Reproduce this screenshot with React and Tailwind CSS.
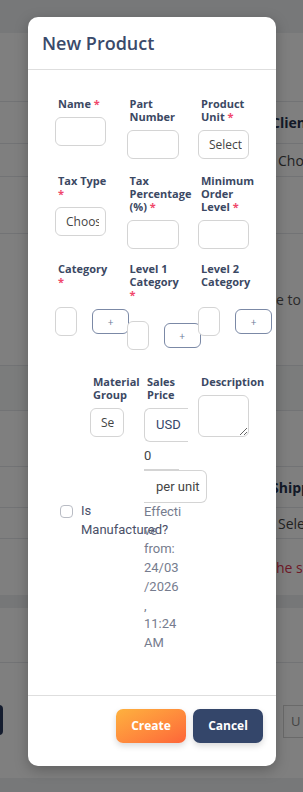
import React from "react";

const Label = ({ children, req }) => (
  <div className="pl-[3px] text-[11px] font-bold leading-[13px] text-[#3b4863]">
    {children}
    {req && <span className="text-[#f0476b]"> *</span>}
  </div>
);

const Box = ({ className = "", pr = "pr-[6px]", children }) => (
  <div
    className={`shrink-0 h-[29px] rounded-[6px] border border-[#d4d4d4] bg-white flex items-center pl-[10px] ${pr} text-[12px] text-[#444] ${className}`}
  >
    <span className="block w-full overflow-hidden whitespace-nowrap">{children}</span>
  </div>
);

const AddButton = () => (
  <button className="shrink-0 w-[37px] h-[25px] rounded-[6px] border border-[#7b89a6] text-[10px] leading-none text-[#6b7a99] bg-white">
    +
  </button>
);

const effective = ["Effecti", "ve", "from:", "24/03", "/2026", ",", "11:24", "AM"];

const BackgroundPage = () => (
  <div className="w-full h-[792px] bg-white overflow-hidden font-['Open_Sans',sans-serif]">
    <div className="h-[33px] bg-[#eef0f3]" />
    <div className="h-[69px] border-b border-[#e5e7eb]" />
    <div className="h-[42px] border-b border-[#e5e7eb] flex items-center pl-[271px] text-[14px] font-bold text-[#26334f] whitespace-nowrap">
      Client
    </div>
    <div className="h-[33px] border-b border-[#e5e7eb] flex items-center pl-[278px] text-[14px] text-[#444] whitespace-nowrap">
      Choose
    </div>
    <div className="h-[57px] border-b border-[#e5e7eb]" />
    <div className="h-[131px] flex items-center pl-[276px] text-[14px] text-[#555] whitespace-nowrap">
      e to upload
    </div>
    <div className="h-[45px] bg-[#f7f8f9] border-t border-[#e5e7eb]" />
    <div className="h-[57px] border-t border-b border-[#e5e7eb]" />
    <div className="h-[41px] border-b border-[#e5e7eb] flex items-center pl-[271px] text-[14px] font-bold text-[#26334f] whitespace-nowrap">
      Shipping
    </div>
    <div className="h-[31px] border-b border-[#e5e7eb] flex items-center pl-[278px] text-[14px] text-[#444] whitespace-nowrap">
      Select
    </div>
    <div className="h-[56px] flex items-center pl-[276px] text-[14px] text-[#e0334f] whitespace-nowrap">
      he shipping
    </div>
    <div className="h-[13px] bg-[#eceef1]" />
    <div className="h-[55px] border-b border-[#e5e7eb]" />
    <div className="h-[115px] flex items-start justify-between pt-[42px]">
      <div className="w-[8px] h-[30px] -ml-[5px] rounded-[6px] bg-[#2a3a5e]" />
      <div className="w-[20px] h-[33px] border-y border-l border-[#d4d4d4] flex items-center pl-[7px] text-[13px] text-[#888]">
        U
      </div>
    </div>
    <div className="h-[14px] bg-[#eef0f3]" />
  </div>
);

export default function App() {
  return (
    <div className="relative w-[303px] h-[792px] overflow-hidden">
      <BackgroundPage />
      <div className="absolute inset-0 bg-black/50" />

      <div className="absolute left-[28px] top-[17px] w-[248px] h-[749px] bg-white rounded-[10px] shadow-[0_4px_14px_rgba(0,0,0,0.25)] flex flex-col overflow-hidden font-['Open_Sans',sans-serif]">
        {/* header */}
        <div className="h-[53px] shrink-0 border-b border-[#dedede] flex items-center pl-[14px]">
          <h1 className="text-[18px] font-semibold text-[#3a4a6b]">New Product</h1>
        </div>

        {/* body */}
        <div className="flex-1 overflow-hidden pt-[27px] pl-[27px]">
          {/* row 1 */}
          <div className="flex gap-[20px] items-start">
            <div className="w-[51.5px]">
              <Label req>Name</Label>
              <Box className="mt-[7px] w-[51px]" />
            </div>
            <div className="w-[51.5px]">
              <Label>Part Number</Label>
              <Box className="mt-[7px] w-[52px]" />
            </div>
            <div className="w-[51.5px]">
              <Label req>Product Unit</Label>
              <Box className="mt-[7px] w-[51px]">Select</Box>
            </div>
          </div>

          {/* row 2 */}
          <div className="flex gap-[20px] items-start mt-[15px]">
            <div className="w-[51.5px]">
              <Label req>Tax Type</Label>
              <Box className="mt-[7px] w-[51px]">Choose</Box>
            </div>
            <div className="w-[51.5px]">
              <Label req>Tax Percentage (%)</Label>
              <Box className="mt-[7px] w-[52px] bg-[#e9ecef]" />
            </div>
            <div className="w-[51.5px]">
              <Label req>Minimum Order Level</Label>
              <Box className="mt-[7px] w-[51px]" />
            </div>
          </div>

          {/* row 3 */}
          <div className="flex gap-[20px] items-start mt-[13px]">
            <div className="w-[51.5px]">
              <Label req>Category</Label>
              <div className="flex items-center gap-[15px] mt-[19px]">
                <Box className="w-[22px]" />
                <AddButton />
              </div>
            </div>
            <div className="w-[51.5px]">
              <Label req>Level 1 Category</Label>
              <div className="flex items-center gap-[15px] mt-[20px]">
                <Box className="w-[22px]" />
                <AddButton />
              </div>
            </div>
            <div className="w-[51.5px]">
              <Label>Level 2 Category</Label>
              <div className="flex items-center gap-[15px] mt-[19px]">
                <Box className="w-[22px]" />
                <AddButton />
              </div>
            </div>
          </div>

          {/* row 4 */}
          <div className="flex gap-[20px] items-start mt-[25px]">
            <div className="w-[15px] mt-[127px]">
              <div className="flex items-start gap-[8px] pl-[5px]">
                <div className="shrink-0 mt-[3px] w-[13px] h-[13px] rounded-[4px] border border-[#b9bcc4] bg-white" />
                <span className="w-[20px] text-[13px] leading-[18.5px] text-[#4a5068] font-['Roboto',sans-serif]">
                  Is Manufactured?
                </span>
              </div>
            </div>
            <div className="w-[34px]">
              <Label>Material Group</Label>
              <Box className="mt-[7px] w-[34px]" pr="pr-[9px]">Select</Box>
            </div>
            <div className="w-[34px]">
              <Label>Sales Price</Label>
              <div className="mt-[7px] w-[44px] h-[34px] border-l border-y border-[#d4d4d4] rounded-l-[6px] flex items-center pl-[11px] text-[13px] text-[#34466a] font-['Roboto',sans-serif]">
                USD
              </div>
              <div className="w-[35px] h-[28px] border-b border-[#d4d4d4] flex items-center text-[13px] text-[#444] font-['Roboto',sans-serif]">
                0
              </div>
              <div className="w-[63px] h-[33px] border-y border-r border-[#d4d4d4] rounded-r-[6px] flex items-center pl-[12px] text-[13px] text-[#444] whitespace-nowrap font-['Roboto',sans-serif]">
                per unit
              </div>
              <div className="text-[13px] leading-[18.7px] text-[#767c8e] font-['Roboto',sans-serif]">
                {effective.map((l, i) => (
                  <div key={i}>{l}</div>
                ))}
              </div>
            </div>
            <div className="w-[51px]">
              <Label>Description</Label>
              <textarea className="block mt-[7px] w-[51px] h-[42px] rounded-[6px] border border-[#d4d4d4] bg-white" />
            </div>
          </div>
        </div>

        {/* footer */}
        <div className="h-[71px] shrink-0 border-t border-[#dedede] flex justify-end items-start gap-[7px] pt-[13px] pr-[13px]">
          <button className="w-[70px] h-[34px] rounded-[7px] bg-gradient-to-br from-[#fdb13f] to-[#fd6439] text-white text-[12px] font-bold shadow-[0_3px_6px_rgba(0,0,0,0.15)]">
            Create
          </button>
          <button className="w-[70px] h-[34px] rounded-[7px] bg-[#34466a] text-white text-[12px] font-bold shadow-[0_3px_6px_rgba(0,0,0,0.15)]">
            Cancel
          </button>
        </div>
      </div>
    </div>
  );
}
